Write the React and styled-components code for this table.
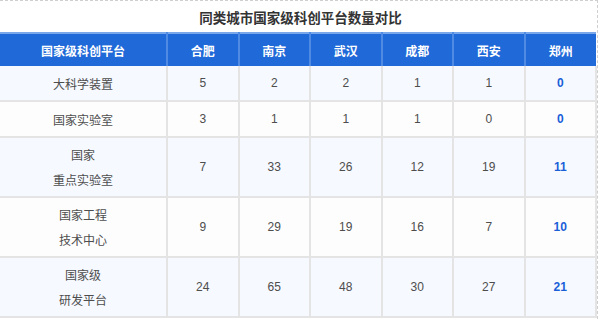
import React from "react";
import styled, { createGlobalStyle } from "styled-components";

const cities = ["合肥", "南京", "武汉", "成都", "西安", "郑州"];

const rows = [
  { name: ["大科学装置"], values: [5, 2, 2, 1, 1, 0], height: 35 },
  { name: ["国家实验室"], values: [3, 1, 1, 1, 0, 0], height: 36 },
  { name: ["国家", "重点实验室"], values: [7, 33, 26, 12, 19, 11], height: 60 },
  { name: ["国家工程", "技术中心"], values: [9, 29, 19, 16, 7, 10], height: 60 },
  { name: ["国家级", "研发平台"], values: [24, 65, 48, 30, 27, 21], height: 60 },
];

export default function App() {
  return (
    <>
      <GlobalStyle />
      <Frame>
        <Title>同类城市国家级科创平台数量对比</Title>
        <Table>
          <colgroup>
            <col style={{ width: 167 }} />
            {cities.map((c) => (
              <col key={c} />
            ))}
          </colgroup>
          <thead>
            <tr>
              <Th>国家级科创平台</Th>
              {cities.map((c) => (
                <Th key={c}>{c}</Th>
              ))}
            </tr>
          </thead>
          <tbody>
            {rows.map((row, i) => (
              <Row key={i} $striped={i % 2 === 0} style={{ height: row.height }}>
                <NameCell>
                  {row.name.map((line) => (
                    <Line key={line}>{line}</Line>
                  ))}
                </NameCell>
                {row.values.map((v, j) => (
                  <Td key={j} $highlight={j === cities.length - 1}>
                    {v}
                  </Td>
                ))}
              </Row>
            ))}
          </tbody>
        </Table>
      </Frame>
    </>
  );
}

const GlobalStyle = createGlobalStyle`
  body {
    margin: 0;
    background: #ffffff;
    font-family: "Liberation Sans", "Noto Sans CJK SC", sans-serif;
  }
`;

const Frame = styled.div`
  width: 598px;
  height: 319px;
  border-top: 1px dashed #cfcfcf;
  border-right: 1px dashed #cfcfcf;
  box-sizing: border-box;
`;

const Title = styled.div`
  height: 31px;
  display: flex;
  align-items: center;
  justify-content: center;
  font-family: "Noto Sans CJK SC", sans-serif;
  font-size: 13.5px;
  font-weight: 700;
  color: #333333;
  padding-left: 4px;
`;

const Table = styled.table`
  width: 597px;
  table-layout: fixed;
  border-collapse: collapse;
  border-top: 2px solid #7aa7ea;
`;

const Th = styled.th`
  height: 32px;
  padding: 0;
  background: #1f69d8;
  color: #ffffff;
  font-family: "Noto Sans CJK SC", sans-serif;
  font-size: 12px;
  font-weight: 700;
  text-align: center;
  border-left: 2px solid #4f8ae3;
  &:first-child {
    border-left: none;
  }
`;

const Row = styled.tr`
  background: ${(p) => (p.$striped ? "#f6f9ff" : "#fdfdfd")};
  border-bottom: 2px solid #e4e4e4;
`;

const Td = styled.td`
  padding: 0;
  text-align: center;
  vertical-align: middle;
  font-size: 12px;
  color: ${(p) => (p.$highlight ? "#1a5fd8" : "#4d4d4d")};
  font-weight: ${(p) => (p.$highlight ? 700 : 400)};
  border-left: 2px solid #e4e4e4;
  border-right: 2px solid #e4e4e4;
`;

const NameCell = styled(Td)`
  font-family: "Noto Sans CJK SC", sans-serif;
  border-left: none;
`;

const Line = styled.div`
  line-height: 25px;
`;
